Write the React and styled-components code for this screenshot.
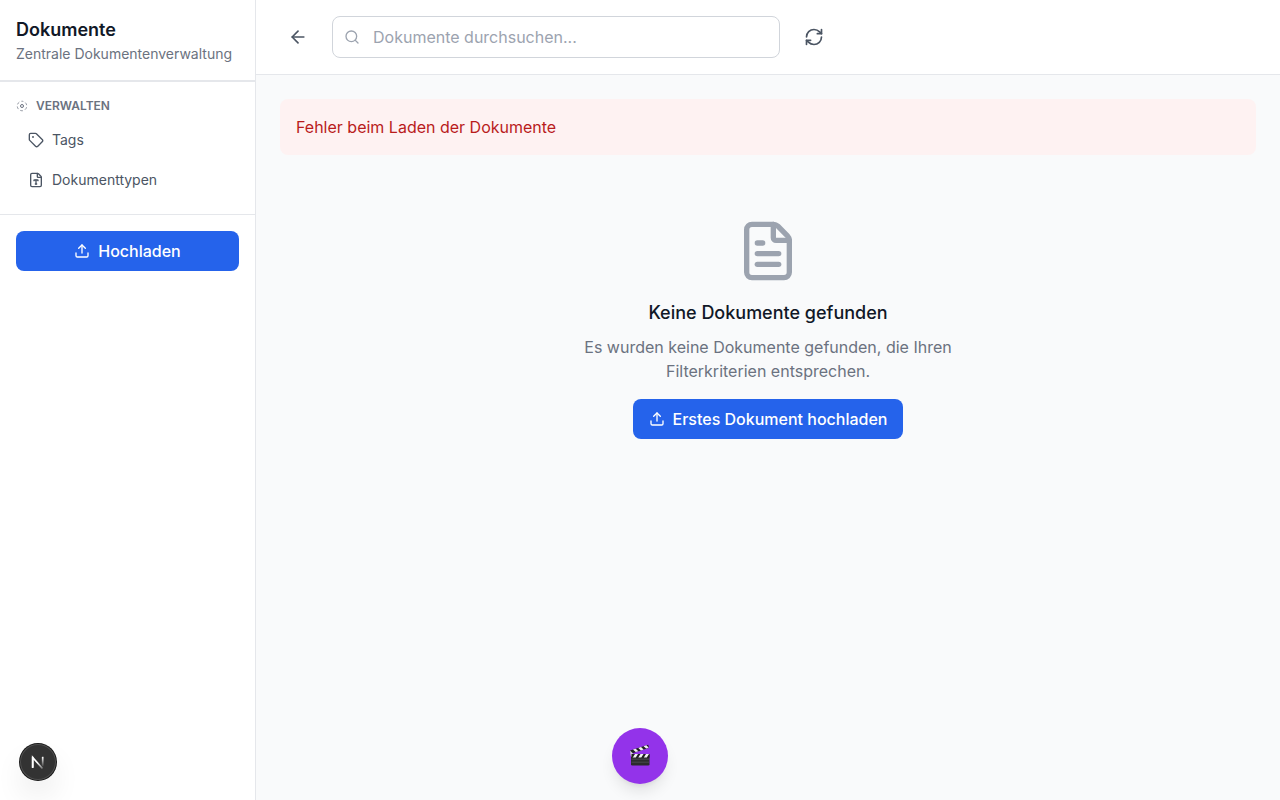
import React from "react";
import styled, { createGlobalStyle } from "styled-components";
import {
  ArrowLeft,
  FileText,
  FileType,
  RefreshCw,
  Search,
  Tag,
  Upload,
} from "lucide-react";

const GlobalStyle = createGlobalStyle`
  *, *::before, *::after {
    box-sizing: border-box;
  }
  body {
    margin: 0;
    font-family: Inter, "Liberation Sans", sans-serif;
    font-size: 16px;
    line-height: 24px;
    color: #111827;
    background-color: #f9fafb;
  }
  h1, h2, h3, p, ul {
    margin: 0;
    padding: 0;
  }
  button, input {
    font: inherit;
  }
  svg {
    flex-shrink: 0;
  }
`;

const Page = styled.div`
  display: flex;
  min-height: 100vh;
`;
const Sidebar = styled.aside`
  width: 256px;
  flex-shrink: 0;
  background-color: white;
  border-right: 1px solid #e5e7eb;
`;
const SidebarHeader = styled.div`
  padding: 16px;
  border-bottom: 1px solid #e5e7eb;
`;
const Title = styled.h1`
  font-size: 18px;
  line-height: 28px;
  font-weight: 600;
`;
const SubTitle = styled.p`
  font-size: 14px;
  line-height: 20px;
  color: #6b7280;
`;
const SidebarSection = styled.div`
  padding: 16px;
  border-top: 1px solid #e5e7eb;
`;
const SectionTitle = styled.h2`
  display: flex;
  align-items: center;
  gap: 8px;
  margin-bottom: 8px;
  font-size: 12px;
  line-height: 16px;
  font-weight: 600;
  text-transform: uppercase;
  color: #6b7280;
`;
const NavList = styled.ul`
  display: flex;
  flex-direction: column;
  gap: 4px;
  list-style: none;
`;
const NavLink = styled.a`
  display: flex;
  align-items: center;
  gap: 8px;
  padding: 8px 12px;
  border-radius: 8px;
  font-size: 14px;
  line-height: 20px;
  color: #4b5563;
  text-decoration: none;
  &:hover {
    background-color: #f3f4f6;
  }
`;
const PrimaryButton = styled.button`
  display: inline-flex;
  align-items: center;
  justify-content: center;
  gap: 8px;
  width: ${(props) => (props.$full ? "100%" : "auto")};
  padding: 8px 16px;
  border: none;
  border-radius: 8px;
  font-weight: 500;
  color: white;
  background-color: #2563eb;
  cursor: pointer;
  &:hover {
    background-color: #1d4ed8;
  }
`;
const Main = styled.main`
  flex: 1;
  min-width: 0;
`;
const Toolbar = styled.header`
  display: flex;
  align-items: center;
  gap: 16px;
  padding: 16px 24px;
  background-color: white;
  border-bottom: 1px solid #e5e7eb;
`;
const IconButton = styled.button`
  display: flex;
  padding: 8px;
  border: none;
  border-radius: 8px;
  color: #4b5563;
  background: none;
  cursor: pointer;
  &:hover {
    background-color: #f3f4f6;
  }
`;
const SearchBox = styled.label`
  flex: 1;
  display: flex;
  align-items: center;
  gap: 12px;
  max-width: 448px;
  padding: 0 12px 0 11px;
  border: 1px solid #d1d5db;
  border-radius: 8px;
  color: #9ca3af;
`;
const SearchInput = styled.input`
  flex: 1;
  min-width: 0;
  height: 40px;
  padding: 0 1px;
  border: none;
  outline: none;
  color: #111827;
  background: none;
  &::placeholder {
    color: #9ca3af;
    opacity: 1;
  }
`;
const Content = styled.div`
  padding: 24px;
`;
const Alert = styled.div`
  padding: 16px;
  border-radius: 8px;
  color: #b91c1c;
  background-color: #fef2f2;
`;
const Empty = styled.section`
  display: flex;
  flex-direction: column;
  align-items: center;
  padding: 64px 0;
  text-align: center;
`;
const EmptyTitle = styled.h3`
  margin: 16px 0 8px;
  font-size: 18px;
  line-height: 28px;
  font-weight: 500;
`;
const EmptyText = styled.p`
  max-width: 448px;
  margin-bottom: 16px;
  color: #6b7280;
`;
const FloatingButton = styled.button`
  position: fixed;
  bottom: 16px;
  left: 50%;
  display: flex;
  align-items: center;
  justify-content: center;
  width: 56px;
  height: 56px;
  margin-left: -28px;
  padding: 0;
  border: none;
  border-radius: 50%;
  background-color: #9333ea;
  box-shadow: 0 10px 15px -3px rgba(0, 0, 0, 0.1),
    0 4px 6px -4px rgba(0, 0, 0, 0.1);
  cursor: pointer;
`;
const DevButton = styled.button`
  position: fixed;
  bottom: 20px;
  left: 20px;
  display: flex;
  align-items: center;
  justify-content: center;
  width: 36px;
  height: 36px;
  padding: 0;
  border: none;
  border-radius: 50%;
  background-color: #333333;
  box-shadow: 0 0 0 1px #171717, inset 0 0 0 1px rgba(255, 255, 255, 0.14),
    0 16px 32px -8px rgba(0, 0, 0, 0.24);
  cursor: pointer;
`;

function GearIcon() {
  return (
    <svg width="12" height="12" viewBox="0 0 24 24" fill="none" stroke="currentColor">
      <circle
        cx="12"
        cy="12"
        r="9.5"
        strokeWidth="1.8"
        strokeDasharray="5.6 4.35"
        strokeDashoffset="2.8"
        transform="rotate(-90 12 12)"
        opacity="0.8"
      />
      <circle cx="12" cy="12" r="3" strokeWidth="2" />
    </svg>
  );
}

function NextMark() {
  return (
    <svg width="36" height="36" viewBox="0 0 36 36" fill="none">
      <defs>
        <linearGradient id="stem" x1="0" y1="13" x2="0" y2="23" gradientUnits="userSpaceOnUse">
          <stop stopColor="white" />
          <stop offset="1" stopColor="white" stopOpacity="0" />
        </linearGradient>
        <linearGradient id="diagonal" x1="18" y1="18" x2="24" y2="25" gradientUnits="userSpaceOnUse">
          <stop stopColor="white" />
          <stop offset="1" stopColor="white" stopOpacity="0.2" />
        </linearGradient>
      </defs>
      <path d="M12.700 23.500V13.500L22.500 24.500" stroke="url(#diagonal)" strokeWidth="1.7" />
      <path d="M12.700 24V12.800" stroke="white" strokeWidth="1.700" />
      <path d="M22.700 12.800v9.700" stroke="url(#stem)" strokeWidth="1.700" />
    </svg>
  );
}

function Clapper() {
  return (
    <svg width="24" height="24" viewBox="0 0 24 24">
      <path d="M3 10.500h18.500v9.700a1.300 1.300 0 0 1-1.300 1.300H4.300A1.300 1.300 0 0 1 3 20.200z" fill="#2b2b2d" />
      <path d="M3.500 15.200h17.500M3.500 18.200h17.500" stroke="#505055" strokeWidth="0.800" />
      <path d="M2 6.500L20.200.8l.8 3L3.200 9.700z" fill="#1f1f21" />
      <path d="M5 5.600l2.700-.9 2.700 2.500-2.700.9zM10.300 3.900l2.700-.8 2.600 2.400-2.700.9zM15.600 2.200l2.700-.9 2.500 2.400-2.700.9z" fill="#f2f2f2" />
      <path d="M2 6.500L4.800 9.300v4.500L2.800 12z" fill="#d4d4d8" />
      <path d="M3.500 10h18v3.600h-18z" fill="#1f1f21" />
      <path d="M7 10h3l-2.200 3.600h-3zM12.500 10h3l-2.200 3.600h-3zM18 10h3l-2.200 3.600h-3z" fill="#f2f2f2" />
    </svg>
  );
}

function App() {
  return (
    <>
      <GlobalStyle />
      <Page>
        <Sidebar>
          <SidebarHeader>
            <Title>Dokumente</Title>
            <SubTitle>Zentrale Dokumentenverwaltung</SubTitle>
          </SidebarHeader>
          <SidebarSection>
            <SectionTitle>
              <GearIcon />
              Verwalten
            </SectionTitle>
            <NavList>
              <li>
                <NavLink href="#tags">
                  <Tag size={16} />
                  Tags
                </NavLink>
              </li>
              <li>
                <NavLink href="#dokumenttypen">
                  <FileType size={16} />
                  Dokumenttypen
                </NavLink>
              </li>
            </NavList>
          </SidebarSection>
          <SidebarSection>
            <PrimaryButton type="button" $full>
              <Upload size={16} />
              Hochladen
            </PrimaryButton>
          </SidebarSection>
        </Sidebar>
        <Main>
          <Toolbar>
            <IconButton type="button" aria-label="Zurück">
              <ArrowLeft size={20} />
            </IconButton>
            <SearchBox>
              <Search size={16} />
              <SearchInput
                type="text"
                aria-label="Dokumente durchsuchen"
                placeholder="Dokumente durchsuchen..."
              />
            </SearchBox>
            <IconButton type="button" aria-label="Aktualisieren">
              <RefreshCw size={20} />
            </IconButton>
          </Toolbar>
          <Content>
            <Alert role="alert">Fehler beim Laden der Dokumente</Alert>
            <Empty>
              <FileText size={64} color="#9ca3af" />
              <EmptyTitle>Keine Dokumente gefunden</EmptyTitle>
              <EmptyText>
                Es wurden keine Dokumente gefunden, die Ihren Filterkriterien
                entsprechen.
              </EmptyText>
              <PrimaryButton type="button">
                <Upload size={16} />
                Erstes Dokument hochladen
              </PrimaryButton>
            </Empty>
          </Content>
        </Main>
      </Page>
      <FloatingButton type="button" aria-label="Aufnahme">
        <Clapper />
      </FloatingButton>
      <DevButton type="button" aria-label="Next.js Dev Tools">
        <NextMark />
      </DevButton>
    </>
  );
}

export default App;
